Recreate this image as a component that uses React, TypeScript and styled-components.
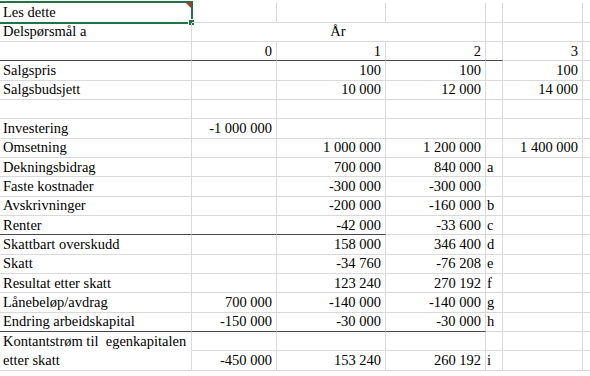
import React from 'react';
import styled, {createGlobalStyle} from 'styled-components';

const GRID = '#d9d9d9';
const DARK = '#4a4a4a';
const SELECT = '#217346';

const GlobalStyle = createGlobalStyle`
  html, body {
    margin: 0;
    padding: 0;
    background: #ffffff;
  }
  body {
    font-family: "Liberation Serif", "Times New Roman", serif;
    font-size: 14.5px;
    color: #000000;
    overflow: hidden;
  }
`;

const Sheet = styled.div`
  display: grid;
  grid-template-columns: 192px 85px 109px 100px 17px 80px 1fr;
  grid-auto-rows: 19.33px;
  margin-top: 3.4px;
  width: 590px;
`;

type Align = 'left' | 'right' | 'center';

const Cell = styled.div<{
  $align: Align;
  $thick?: boolean;
  $span?: number;
  $open?: boolean;
  $tight?: boolean;
}>`
  position: relative;
  display: flex;
  align-items: flex-end;
  justify-content: ${p =>
    p.$align === 'right' ? 'flex-end' : p.$align === 'center' ? 'center' : 'flex-start'};
  grid-column: span ${p => p.$span ?? 1};
  box-sizing: border-box;
  padding: 0 ${p => (p.$tight ? '1px' : '4px')} 1px ${p => (p.$tight ? '1px' : '3px')};
  border-right: 1px solid ${GRID};
  border-bottom: 1px solid ${p => (p.$thick ? DARK : p.$open ? 'transparent' : GRID)};
  line-height: 1.15;
  white-space: pre;
  overflow: visible;
  min-width: 0;
`;

const Selection = styled.div`
  position: absolute;
  top: -2px;
  left: -2px;
  right: -2px;
  bottom: -2px;
  border: 2px solid ${SELECT};
  pointer-events: none;
`;

const CommentMark = styled.div`
  position: absolute;
  top: 0;
  right: 0;
  width: 0;
  height: 0;
  border-top: 5px solid #e0201b;
  border-left: 5px solid transparent;
`;

const FillHandle = styled.div`
  position: absolute;
  right: -4px;
  bottom: -4px;
  width: 5px;
  height: 5px;
  background: ${SELECT};
  border: 1px solid #ffffff;
`;

type CellSpec = {
  text?: string;
  span?: number;
  align?: Align;
  open?: boolean;
};

type RowSpec = {
  cells: (string | CellSpec)[];
  thickTo?: number; // number of leading columns with a dark bottom border
};

const COL_ALIGN: Align[] = ['left', 'right', 'right', 'right', 'left', 'right', 'left'];

const rows: RowSpec[] = [
  {cells: ['Les dette', '', '', '', '', '', '']},
  {cells: ['Delspørsmål a', {text: 'År', span: 3, align: 'center'}, '', '', '']},
  {cells: ['', '0', '1', '2', '', '3', ''], thickTo: 5},
  {cells: ['Salgspris', '', '100', '100', '', '100', '']},
  {cells: ['Salgsbudsjett', '', '10 000', '12 000', '', '14 000', '']},
  {cells: ['', '', '', '', '', '', '']},
  {cells: ['Investering', '-1 000 000', '', '', '', '', '']},
  {cells: ['Omsetning', '', '1 000 000', '1 200 000', '', '1 400 000', '']},
  {cells: ['Dekningsbidrag', '', '700 000', '840 000', 'a', '', '']},
  {cells: ['Faste kostnader', '', '-300 000', '-300 000', '', '', '']},
  {cells: ['Avskrivninger', '', '-200 000', '-160 000', 'b', '', '']},
  {cells: ['Renter', '', '-42 000', '-33 600', 'c', '', ''], thickTo: 3},
  {cells: ['Skattbart overskudd', '', '158 000', '346 400', 'd', '', '']},
  {cells: ['Skatt', '', '-34 760', '-76 208', 'e', '', '']},
  {cells: ['Resultat etter skatt', '', '123 240', '270 192', 'f', '', '']},
  {cells: ['Lånebeløp/avdrag', '700 000', '-140 000', '-140 000', 'g', '', '']},
  {cells: ['Endring arbeidskapital', '-150 000', '-30 000', '-30 000', 'h', '', ''], thickTo: 4},
  {cells: [{text: 'Kontantstrøm til  egenkapitalen', open: true}, '', '', '', '', '', '']},
  {cells: ['etter skatt', '-450 000', '153 240', '260 192', 'i', '', '']},
];

const SheetRow = ({row, index}: {row: RowSpec; index: number}) => {
  let col = 0;
  return (
    <>
      {row.cells.map((c, i) => {
        const spec: CellSpec = typeof c === 'string' ? {text: c} : c;
        const start = col;
        const span = spec.span ?? 1;
        col += span;
        const isActive = index === 0 && start === 0;
        return (
          <Cell
            key={i}
            $align={spec.align ?? COL_ALIGN[start]}
            $span={span}
            $thick={row.thickTo !== undefined && start < row.thickTo}
            $open={spec.open}
            $tight={start === 4}>
            {spec.text}
            {isActive && (
              <Selection>
                <CommentMark />
                <FillHandle />
              </Selection>
            )}
          </Cell>
        );
      })}
    </>
  );
};

export default function App() {
  return (
    <>
      <GlobalStyle />
      <Sheet>
        {rows.map((row, i) => (
          <SheetRow key={i} row={row} index={i} />
        ))}
      </Sheet>
    </>
  );
}
